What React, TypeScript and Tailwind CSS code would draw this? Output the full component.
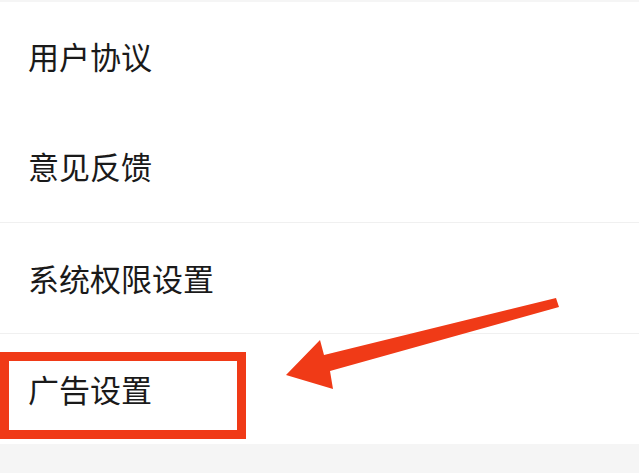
import React from 'react'

const items = ['用户协议', '意见反馈', '系统权限设置', '广告设置']

const Arrow: React.FC = () => (
  <svg
    className="absolute left-0 top-0 pointer-events-none"
    width="639"
    height="473"
    viewBox="0 0 639 473"
  >
    <polygon
      points="556,298 324,355 320,340 286,375 333,389 330,371 559,307"
      fill="#f03a17"
    />
  </svg>
)

const App: React.FC = (): JSX.Element => {
  return (
    <div
      className="relative w-[639px] h-[473px] overflow-hidden bg-[#f5f5f5] pt-[2px]"
      style={{ fontFamily: '"Noto Sans CJK SC", "Noto Sans", sans-serif' }}
    >
      <div className="bg-white">
        {items.map((item, i) => (
          <div
            key={item}
            className={
              i >= 2
                ? 'h-[111px] flex items-center pl-[28px] border-t border-[#f0f0f0] text-[31px] text-[#1a1a1a]'
                : i === 1
                  ? 'h-[111px] flex items-center pl-[28px] text-[31px] text-[#1a1a1a]'
                  : 'h-[109px] flex items-center pl-[28px] text-[31px] text-[#1a1a1a]'
            }
          >
            {item}
          </div>
        ))}
      </div>
      <div className="absolute left-0 top-[352px] w-[246px] h-[87px] border-[9px] border-[#f03a17]" />
      <Arrow />
    </div>
  )
}

export default App
